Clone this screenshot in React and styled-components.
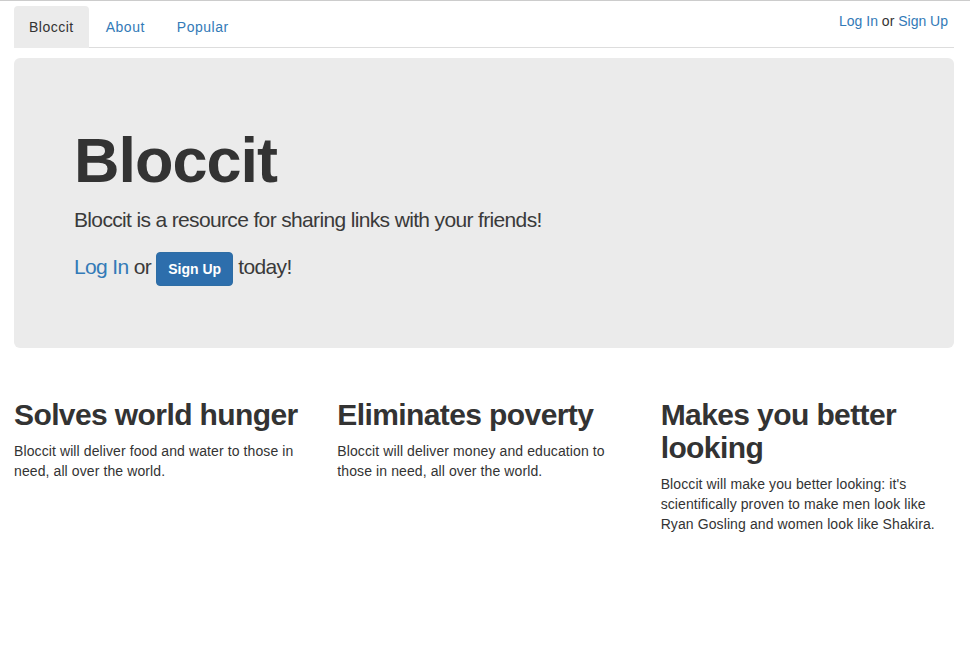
import React from "react";
import styled, { createGlobalStyle } from "styled-components";

const blue = "#337ab7";
const textColor = "#333";

const GlobalStyle = createGlobalStyle`
  html, body {
    margin: 0;
    padding: 0;
    background: #fff;
  }
  body {
    font-family: "Liberation Sans", Arial, sans-serif;
    font-size: 14px;
    line-height: 20px;
    color: ${textColor};
    border-top: 1px solid #ccc;
  }
  * {
    box-sizing: border-box;
  }
`;

const Container = styled.div`
  padding: 5px 16px 0 14px;
`;

const NavBar = styled.nav`
  display: flex;
  align-items: center;
  justify-content: space-between;
  border-bottom: 1px solid #ddd;
  margin-bottom: 10px;
`;

const Tabs = styled.ul`
  display: flex;
  list-style: none;
  margin: 0 0 -1px;
  padding: 0;
`;

const Tab = styled.li`
  margin-right: 2px;

  a {
    display: block;
    padding: 11px 15px;
    line-height: 20px;
    letter-spacing: 0.5px;
    border-radius: 4px 4px 0 0;
    text-decoration: none;
    color: ${({ $active }) => ($active ? "#333" : blue)};
    background: ${({ $active }) => ($active ? "#ebebeb" : "transparent")};
  }
`;

const UserLinks = styled.div`
  padding-right: 6px;
  margin-top: -11px;

  a {
    color: ${blue};
    text-decoration: none;
  }
`;

const Jumbotron = styled.div`
  background: #ebebeb;
  border-radius: 6px;
  padding: 48px 60px 47px;
  margin-bottom: 30px;

  h1 {
    font-size: 63px;
    line-height: 1.1;
    font-weight: 700;
    margin: 20px 0 10px;
    letter-spacing: -1px;
    color: ${textColor};
  }

  p {
    font-size: 21px;
    line-height: 30px;
    font-weight: 300;
    margin: 0 0 15px;
    letter-spacing: -0.65px;
    color: #3a3a3a;
  }

  a {
    color: ${blue};
    text-decoration: none;
  }
`;

const Button = styled.a`
  display: inline-block;
  vertical-align: middle;
  padding: 6px 11px;
  font-size: 14px;
  line-height: 20px;
  font-weight: 700;
  letter-spacing: 0;
  color: #fff !important;
  background: #2d6eac;
  border: 1px solid #2e6da4;
  border-radius: 4px;
  margin: 2px 0 0;
`;

const Row = styled.div`
  display: grid;
  grid-template-columns: repeat(3, 1fr);
  margin: 0 -15px;
`;

const Column = styled.div`
  padding: 0 15px;

  h2 {
    font-size: 30px;
    line-height: 33px;
    font-weight: 700;
    margin: 20px 0 10px;
    letter-spacing: -0.6px;
  }

  p {
    margin: 0 0 10px;
    letter-spacing: 0.1px;
  }
`;

const features = [
  {
    title: "Solves world hunger",
    body: "Bloccit will deliver food and water to those in need, all over the world.",
  },
  {
    title: "Eliminates poverty",
    body: "Bloccit will deliver money and education to those in need, all over the world.",
  },
  {
    title: "Makes you better looking",
    body: "Bloccit will make you better looking: it's scientifically proven to make men look like Ryan Gosling and women look like Shakira.",
  },
];

export default function App() {
  return (
    <>
      <GlobalStyle />
      <Container>
        <NavBar>
          <Tabs>
            <Tab $active>
              <a href="#">Bloccit</a>
            </Tab>
            <Tab>
              <a href="#">About</a>
            </Tab>
            <Tab>
              <a href="#">Popular</a>
            </Tab>
          </Tabs>
          <UserLinks>
            <a href="#">Log In</a> or <a href="#">Sign Up</a>
          </UserLinks>
        </NavBar>

        <Jumbotron>
          <h1>Bloccit</h1>
          <p>Bloccit is a resource for sharing links with your friends!</p>
          <p>
            <a href="#">Log In</a> or <Button href="#">Sign Up</Button> today!
          </p>
        </Jumbotron>

        <Row>
          {features.map((f) => (
            <Column key={f.title}>
              <h2>{f.title}</h2>
              <p>{f.body}</p>
            </Column>
          ))}
        </Row>
      </Container>
    </>
  );
}
